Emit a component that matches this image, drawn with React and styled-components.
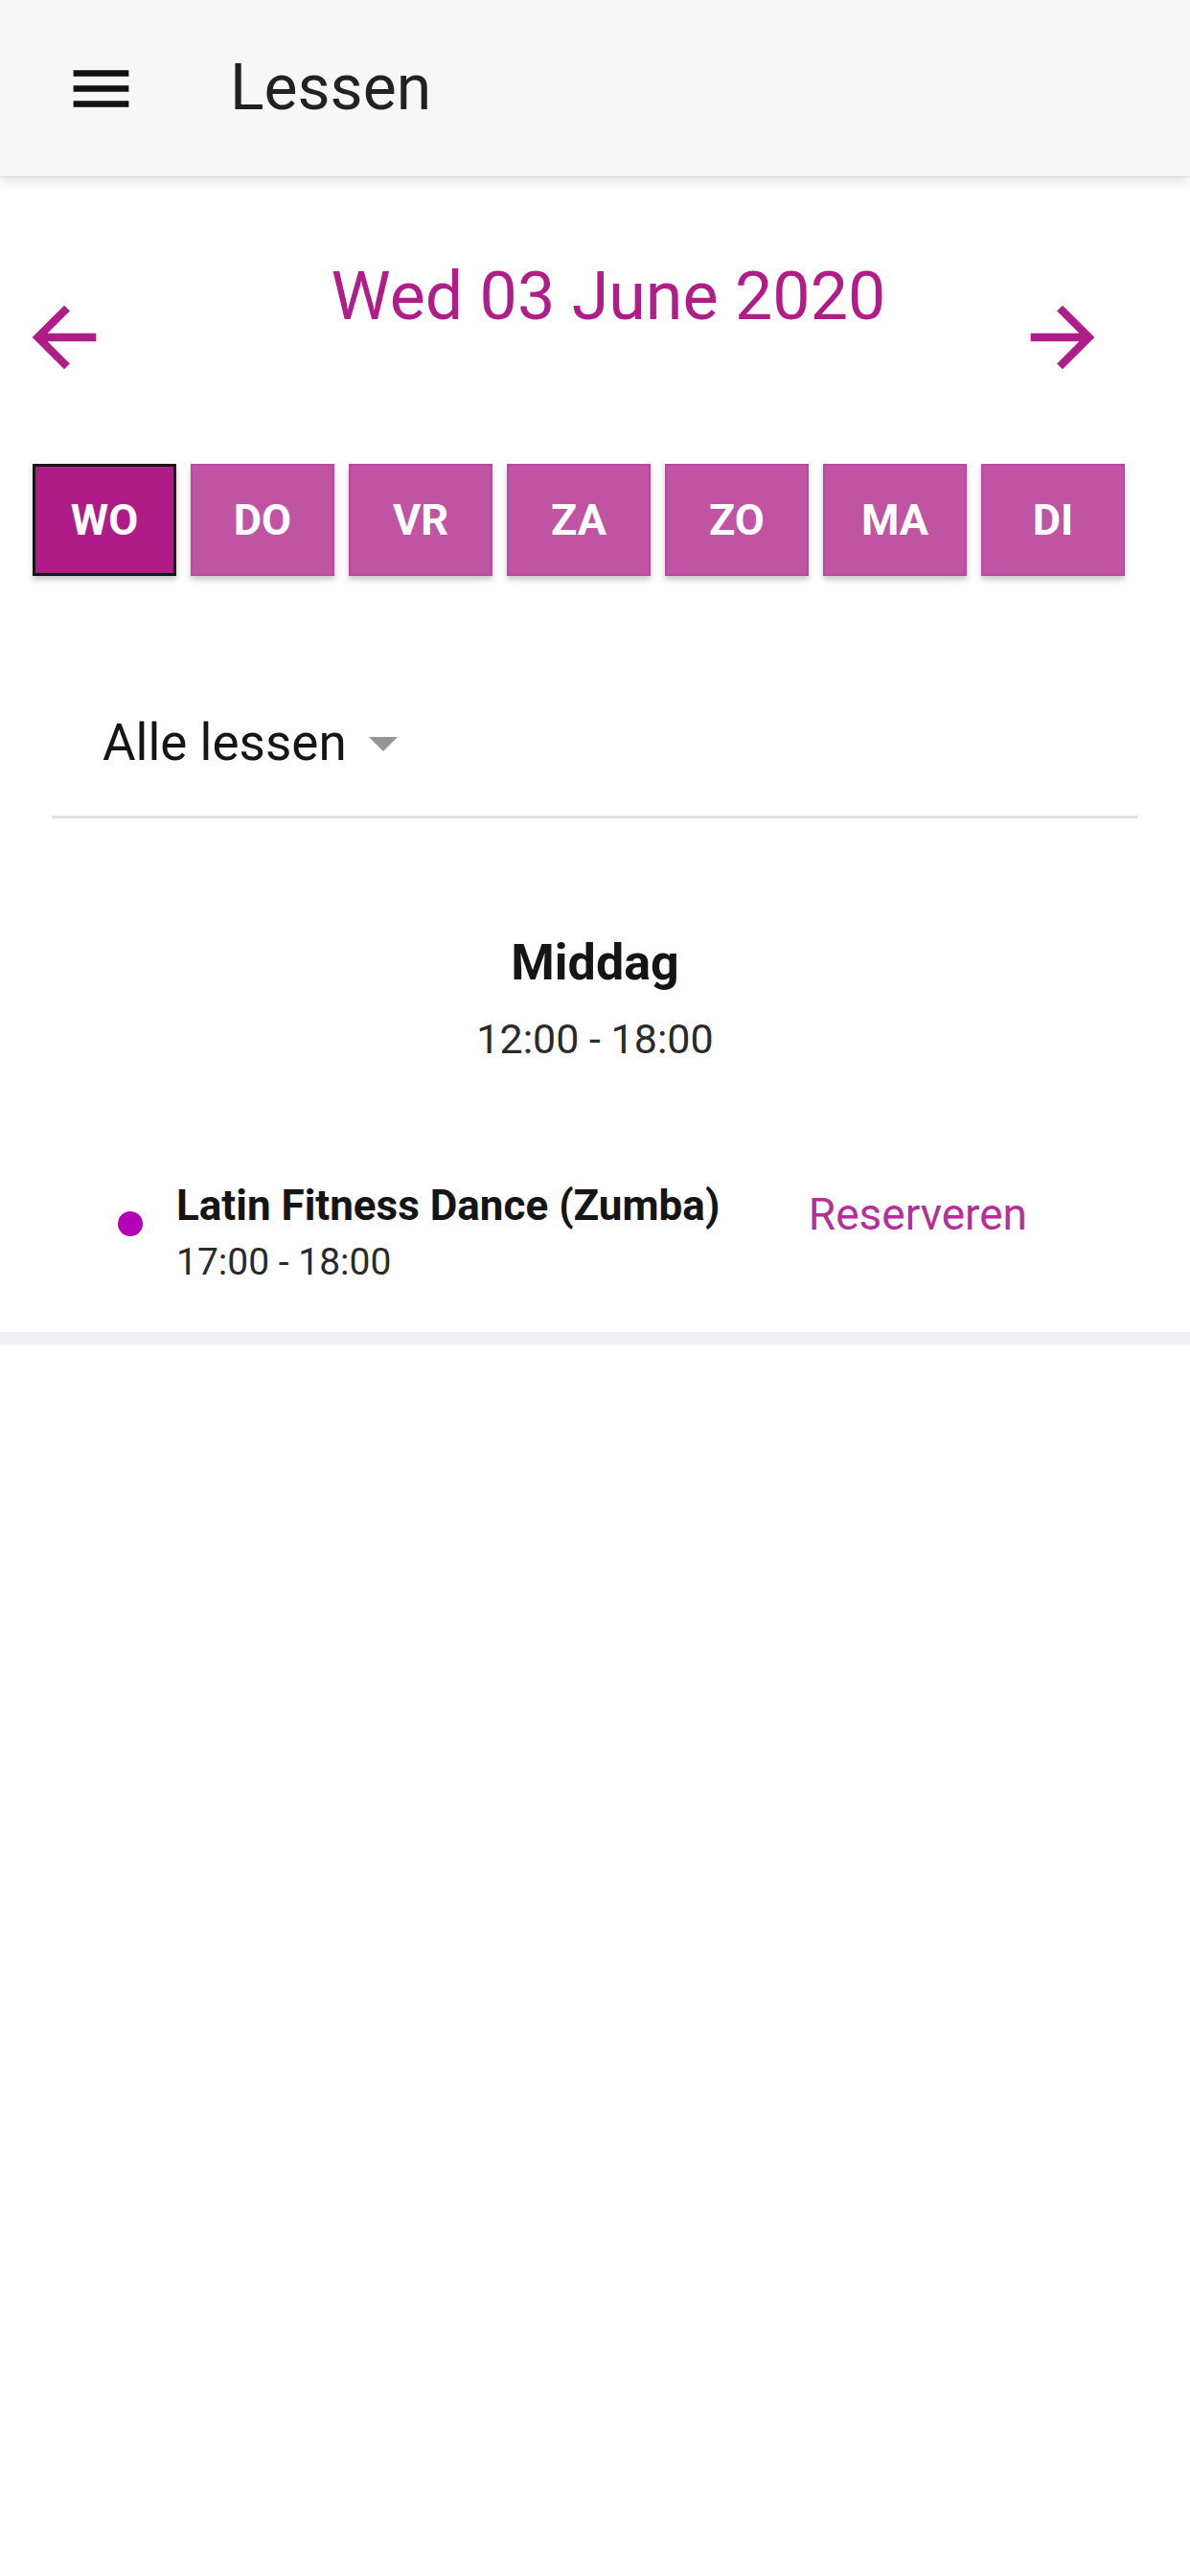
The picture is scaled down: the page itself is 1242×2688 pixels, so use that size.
import React from "react";
import styled, { createGlobalStyle } from "styled-components";

const GlobalStyle = createGlobalStyle`
  html, body {
    margin: 0;
    padding: 0;
    background: #ffffff;
    font-family: Roboto, "Noto Sans", "Liberation Sans", sans-serif;
  }
  * { box-sizing: border-box; }
`;

const PRIMARY = "#b01c88";

const Page = styled.div`
  width: 1242px;
  min-height: 2688px;
  background: #fff;
`;

const TopBar = styled.header`
  height: 184px;
  background: #f7f7f7;
  display: flex;
  align-items: center;
  padding-left: 67px;
  box-shadow: 0 1px 1px rgba(0, 0, 0, 0.08), 0 5px 12px rgba(0, 0, 0, 0.12);
  position: relative;
  z-index: 1;
`;

const MenuButton = styled.button`
  width: 77px;
  height: 77px;
  padding: 0;
  border: 0;
  background: transparent;
  display: flex;
  color: #111;
`;

const BarTitle = styled.h1`
  margin: 0 0 0 96px;
  font-size: 66px;
  font-weight: 400;
  color: #222;
  line-height: 78px;
`;

const DateNav = styled.div`
  display: flex;
  align-items: flex-start;
  padding: 84px 83px 0 17px;
`;

const ArrowButton = styled.button`
  width: 100px;
  height: 100px;
  margin-top: 34px;
  padding: 0;
  border: 0;
  background: transparent;
  color: ${PRIMARY};
  display: flex;
  flex: none;
`;

const DateTitle = styled.h2`
  flex: 1;
  margin: 0;
  padding-left: 94px;
  text-align: center;
  font-size: 70px;
  line-height: 82px;
  font-weight: 400;
  color: ${PRIMARY};
  white-space: nowrap;
`;

const DayRow = styled.div`
  display: flex;
  gap: 15px;
  padding-left: 34px;
  margin-top: 82px;
`;

const DayButton = styled.button`
  width: 150px;
  height: 117px;
  padding: 0;
  border: ${(p) => (p.$active ? "3px solid #151515" : "2px solid #b94a9d")};
  background: ${(p) => (p.$active ? "#b01c87" : "#c054a3")};
  color: #fff;
  font-family: Roboto, "Liberation Sans", sans-serif;
  font-size: 45px;
  font-weight: 700;
  box-shadow: 0 4px 6px rgba(0, 0, 0, 0.22);
  display: flex;
  align-items: center;
  justify-content: center;
`;

const Filter = styled.div`
  margin: 143px 54px 0 54px;
  padding: 0 0 45px 53px;
  border-bottom: 3px solid #e2e2e2;
  display: flex;
  align-items: center;
`;

const FilterLabel = styled.span`
  font-size: 53px;
  line-height: 62px;
  color: #151515;
`;

const Caret = styled.span`
  width: 0;
  height: 0;
  margin-left: 23px;
  margin-top: 2px;
  border-left: 15px solid transparent;
  border-right: 15px solid transparent;
  border-top: 15px solid #959595;
`;

const Period = styled.section`
  margin-top: 121px;
  text-align: center;
`;

const PeriodName = styled.h3`
  margin: 0;
  font-size: 52px;
  line-height: 60px;
  font-weight: 700;
  color: #151515;
`;

const PeriodTime = styled.div`
  margin-top: 24px;
  font-size: 43px;
  line-height: 50px;
  color: #2a2a2a;
`;

const LessonRow = styled.div`
  margin-top: 123px;
  display: flex;
  align-items: flex-start;
  padding: 0 170px 0 123px;
`;

const Dot = styled.span`
  width: 26px;
  height: 26px;
  border-radius: 50%;
  background: #b300b6;
  margin-top: 32px;
  margin-right: 35px;
  flex: none;
`;

const LessonInfo = styled.div`
  flex: 1;
  display: flex;
  flex-direction: column;
  gap: 10px;
`;

const LessonName = styled.div`
  font-size: 44px;
  line-height: 52px;
  font-weight: 700;
  color: #151515;
  white-space: nowrap;
`;

const LessonTime = styled.div`
  font-size: 39px;
  line-height: 46px;
  color: #2a2a2a;
`;

const ReserveLink = styled.a`
  margin-top: 8px;
  font-size: 46px;
  line-height: 54px;
  color: #b3309a;
  text-decoration: none;
  white-space: nowrap;
`;

const Divider = styled.div`
  margin-top: 50px;
  height: 13px;
  background: #eff0f4;
`;

const MenuIcon = () => (
  <svg width="77" height="77" viewBox="0 0 24 24" fill="currentColor">
    <path d="M3 18h18v-2H3v2zm0-5h18v-2H3v2zm0-7v2h18V6H3z" />
  </svg>
);

const ArrowBack = () => (
  <svg width="100" height="100" viewBox="0 0 24 24" fill="currentColor">
    <path d="M20 11H7.83l5.59-5.59L12 4l-8 8 8 8 1.41-1.41L7.83 13H20v-2z" />
  </svg>
);

const ArrowForward = () => (
  <svg width="100" height="100" viewBox="0 0 24 24" fill="currentColor">
    <path d="M12 4l-1.41 1.41L16.17 11H4v2h12.17l-5.58 5.59L12 20l8-8z" />
  </svg>
);

const days = ["WO", "DO", "VR", "ZA", "ZO", "MA", "DI"];

export default function App() {
  return (
    <Page>
      <GlobalStyle />
      <TopBar>
        <MenuButton aria-label="menu">
          <MenuIcon />
        </MenuButton>
        <BarTitle>Lessen</BarTitle>
      </TopBar>

      <DateNav>
        <ArrowButton aria-label="vorige">
          <ArrowBack />
        </ArrowButton>
        <DateTitle>Wed 03 June 2020</DateTitle>
        <ArrowButton aria-label="volgende">
          <ArrowForward />
        </ArrowButton>
      </DateNav>

      <DayRow>
        {days.map((d, i) => (
          <DayButton key={d} $active={i === 0}>
            {d}
          </DayButton>
        ))}
      </DayRow>

      <Filter>
        <FilterLabel>Alle lessen</FilterLabel>
        <Caret />
      </Filter>

      <Period>
        <PeriodName>Middag</PeriodName>
        <PeriodTime>12:00 - 18:00</PeriodTime>
      </Period>

      <LessonRow>
        <Dot />
        <LessonInfo>
          <LessonName>Latin Fitness Dance (Zumba)</LessonName>
          <LessonTime>17:00 - 18:00</LessonTime>
        </LessonInfo>
        <ReserveLink href="#">Reserveren</ReserveLink>
      </LessonRow>

      <Divider />
    </Page>
  );
}
